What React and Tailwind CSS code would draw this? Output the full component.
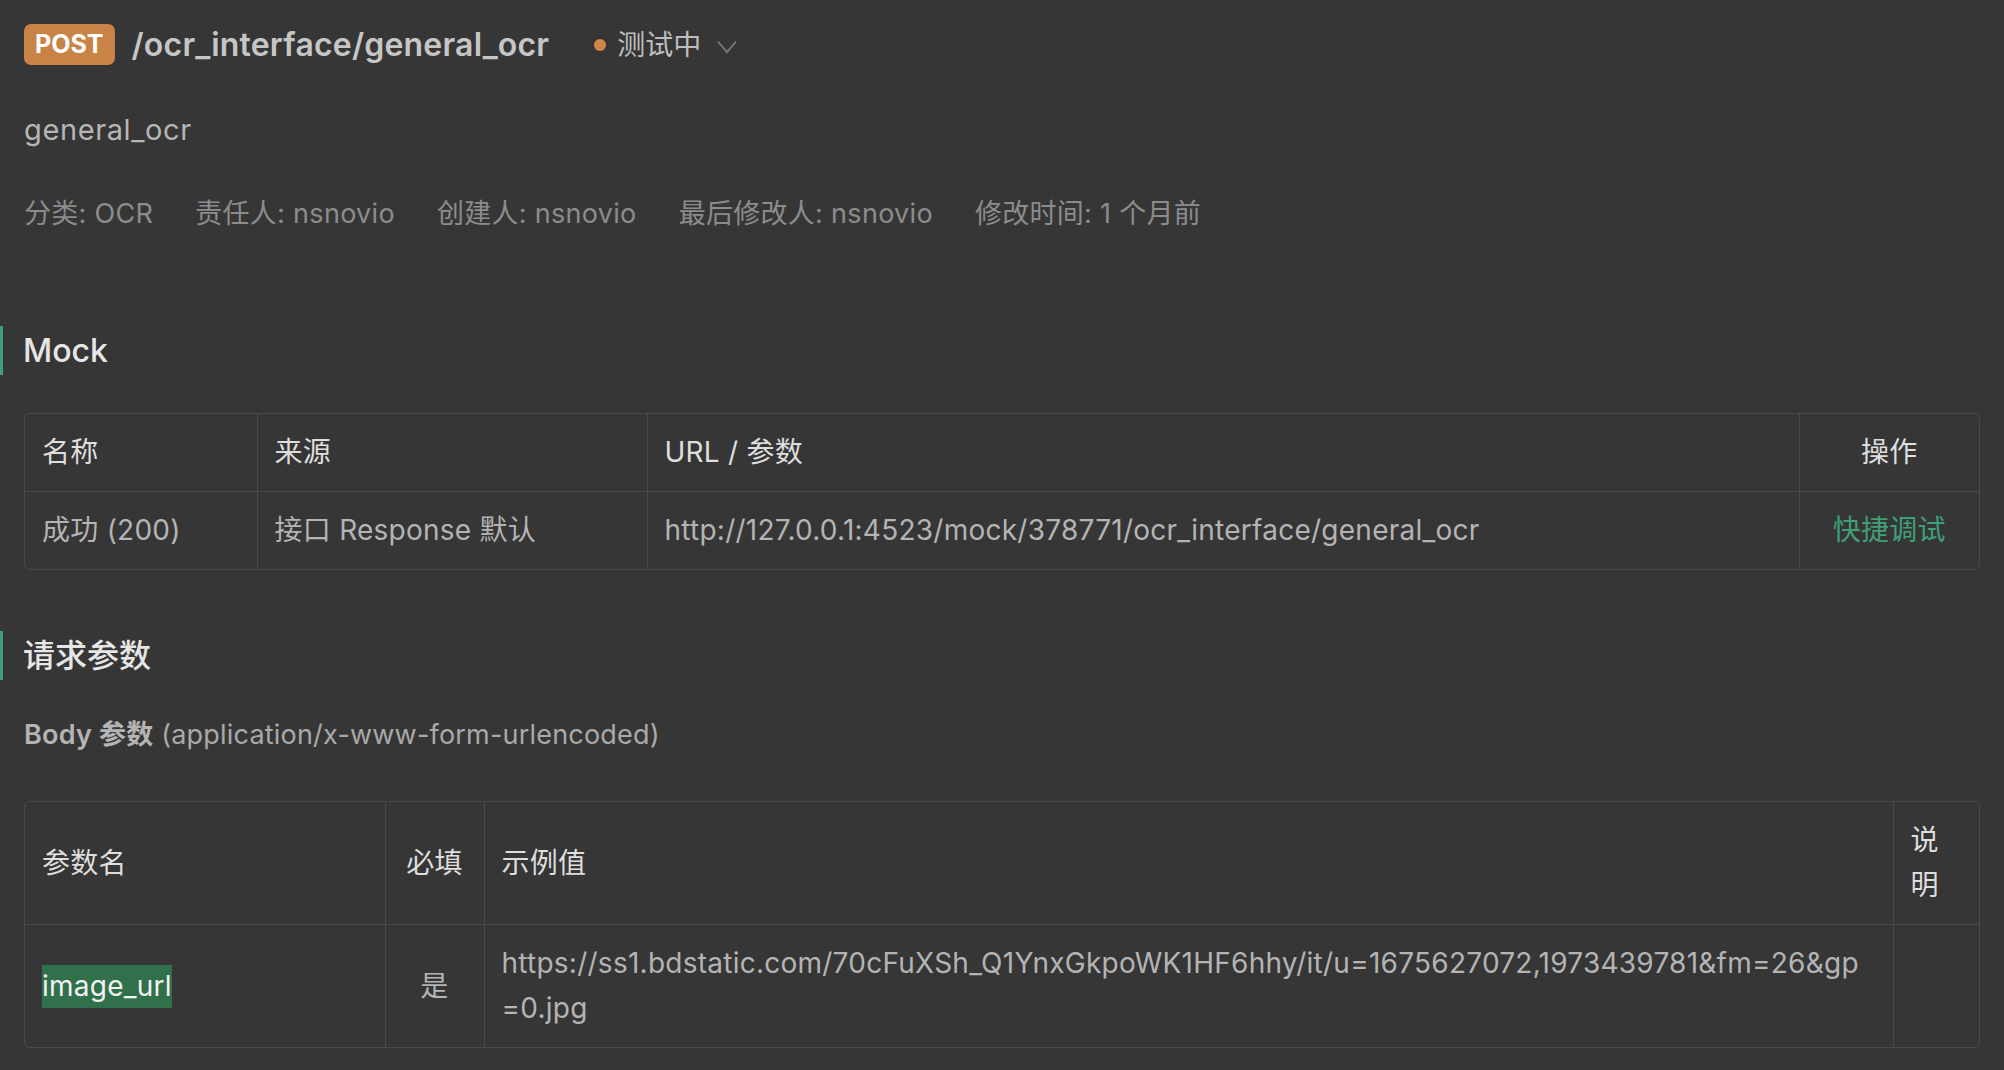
import React from "react";

const font = { fontFamily: '"Inter", "Noto Sans CJK SC", sans-serif' };

const SectionTitle = ({ children }) => (
  <div className="-ml-6 border-l-[3px] border-[#3f9f76] pl-[20px] text-[32px] leading-[49px] font-medium text-[#e6e6e6]">
    {children}
  </div>
);

// shared cell styles (alignment and colour are added per cell)
const th = "border-[#4a4a4a] px-[17px] py-4 font-normal text-[#dedede] align-middle";
const td = "border-[#4a4a4a] px-[17px] py-4 align-middle";

const MockTable = () => (
  <div className="rounded-[6px] border border-[#4a4a4a] overflow-hidden">
    <table className="w-full table-fixed border-collapse text-[28px] leading-[45px] tracking-[0.25px]">
      <colgroup>
        <col className="w-[232px]" />
        <col className="w-[390px]" />
        <col />
        <col className="w-[180px]" />
      </colgroup>
      <thead>
        <tr>
          <th className={`${th} text-left border-r border-b`}>名称</th>
          <th className={`${th} text-left border-r border-b`}>来源</th>
          <th className={`${th} text-left border-r border-b`}>URL / 参数</th>
          <th className={`${th} text-center border-b`}>操作</th>
        </tr>
      </thead>
      <tbody>
        <tr>
          <td className={`${td} text-[#b4b4b4] border-r`}>成功 (200)</td>
          <td className={`${td} text-[#b4b4b4] border-r`}>接口 Response 默认</td>
          <td className={`${td} text-[#b4b4b4] border-r`}>
            http://127.0.0.1:4523/mock/378771/ocr_interface/general_ocr
          </td>
          <td className={`${td} text-center text-[#3f9f76]`}>快捷调试</td>
        </tr>
      </tbody>
    </table>
  </div>
);

const ParamsTable = () => (
  <div className="rounded-[6px] border border-[#4a4a4a] overflow-hidden">
    <table className="w-full table-fixed border-collapse text-[28px] leading-[45px] tracking-[0.25px]">
      <colgroup>
        <col className="w-[360px]" />
        <col className="w-[99px]" />
        <col />
        <col className="w-[86px]" />
      </colgroup>
      <thead>
        <tr>
          <th className={`${th} text-left border-r border-b`}>参数名</th>
          <th className={`${th} text-center border-r border-b`}>必填</th>
          <th className={`${th} text-left border-r border-b`}>示例值</th>
          <th className={`${th} text-left border-b`}>说明</th>
        </tr>
      </thead>
      <tbody>
        <tr>
          <td className={`${td} text-[#b4b4b4] border-r`}>
            <span className="inline-block bg-[#30704b] text-[#f2f2f2] leading-[43px]">
              image_url
            </span>
          </td>
          <td className={`${td} text-[#b4b4b4] text-center border-r`}>是</td>
          <td className={`${td} text-[#b4b4b4] border-r break-all`}>
            https://ss1.bdstatic.com/70cFuXSh_Q1YnxGkpoWK1HF6hhy/it/u=1675627072,1973439781&amp;fm=26&amp;gp=0.jpg
          </td>
          <td className={td}></td>
        </tr>
      </tbody>
    </table>
  </div>
);

export default function App() {
  return (
    <div className="min-h-screen bg-[#363636] px-6 pt-6 pb-6" style={font}>
      {/* header */}
      <div className="flex items-center h-[41px]">
        <span className="flex items-center h-[41px] rounded-[7px] bg-[#c98347] px-[11px] text-[25px] font-bold text-white">
          POST
        </span>
        <span className="ml-[17px] text-[32px] font-semibold tracking-[0.2px] text-[#c6c6c6]">
          /ocr_interface/general_ocr
        </span>
        <span className="ml-[45px] h-3 w-3 rounded-full bg-[#d0874a]" />
        <span className="ml-[11px] text-[28px] text-[#bdbdbd]">测试中</span>
        <svg className="ml-[16px] mt-[4px]" width="20" height="14" viewBox="0 0 20 14" fill="none">
          <polyline points="1,1.5 10,12 19,1.5" stroke="#7a7a7a" strokeWidth="1.8" />
        </svg>
      </div>

      <div className="mt-[42px] text-[29px] leading-[45px] tracking-[0.6px] text-[#b6b6b6]">general_ocr</div>

      <div className="mt-[40px] flex gap-[42px] text-[27px] leading-[43px] tracking-[0.3px] text-[#8c8c8c]">
        <span>分类: OCR</span>
        <span>责任人: nsnovio</span>
        <span>创建人: nsnovio</span>
        <span>最后修改人: nsnovio</span>
        <span>修改时间: 1 个月前</span>
      </div>

      <div className="mt-[91px]">
        <SectionTitle>Mock</SectionTitle>
      </div>
      <div className="mt-[38px]">
        <MockTable />
      </div>

      <div className="mt-[61px]">
        <SectionTitle>请求参数</SectionTitle>
      </div>
      <div className="mt-[33px] text-[27px] leading-[43px] tracking-[0.2px] text-[#a9a9a9]">
        <span className="font-semibold text-[#b4b4b4]">Body 参数</span> (application/x-www-form-urlencoded)
      </div>
      <div className="mt-[45px]">
        <ParamsTable />
      </div>
    </div>
  );
}
